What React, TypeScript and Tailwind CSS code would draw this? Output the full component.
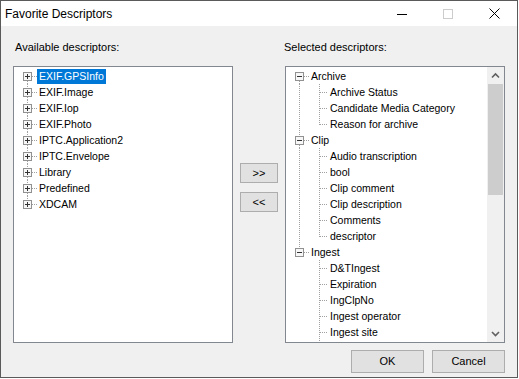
import React from 'react';

type Node = { label: string; children?: string[]; selected?: boolean; more?: boolean };

const available: Node[] = [
  { label: 'EXIF.GPSInfo', children: [], selected: true },
  { label: 'EXIF.Image', children: [] },
  { label: 'EXIF.Iop', children: [] },
  { label: 'EXIF.Photo', children: [] },
  { label: 'IPTC.Application2', children: [] },
  { label: 'IPTC.Envelope', children: [] },
  { label: 'Library', children: [] },
  { label: 'Predefined', children: [] },
  { label: 'XDCAM', children: [] },
];

// "more" = list keeps going below the visible area
const selected: Node[] = [
  { label: 'Archive', children: ['Archive Status', 'Candidate Media Category', 'Reason for archive'] },
  { label: 'Clip', children: ['Audio transcription', 'bool', 'Clip comment', 'Clip description', 'Comments', 'descriptor'] },
  { label: 'Ingest', children: ['D&TIngest', 'Expiration', 'IngClpNo', 'Ingest operator', 'Ingest site'], more: true },
];

const DOT = '#a0a0a0';

// one row of tree lines, drawn per row so the dotted guides join up
function RootGutter({ first, last, expanded }: { first: boolean; last: boolean; expanded: boolean }) {
  return (
    <svg width="23" height="16" className="shrink-0" shapeRendering="crispEdges">
      {!first && <line x1="13.5" y1="0" x2="13.5" y2="4" stroke={DOT} strokeDasharray="1 1" />}
      {!last && <line x1="13.5" y1="13" x2="13.5" y2="16" stroke={DOT} strokeDasharray="1 1" />}
      <line x1="18" y1="8.5" x2="23" y2="8.5" stroke={DOT} strokeDasharray="1 1" />
      <rect x="9.5" y="4.5" width="8" height="8" fill="#f7f7f7" stroke="#919191" />
      <line x1="11" y1="8.5" x2="16" y2="8.5" stroke="#333" />
      {!expanded && <line x1="13.5" y1="6" x2="13.5" y2="11" stroke="#333" />}
    </svg>
  );
}

function LeafGutter({ rootLine, lastChild }: { rootLine: boolean; lastChild: boolean }) {
  return (
    <svg width="42" height="16" className="shrink-0" shapeRendering="crispEdges">
      {rootLine && <line x1="13.5" y1="0" x2="13.5" y2="16" stroke={DOT} strokeDasharray="1 1" />}
      <line x1="33.5" y1="0" x2="33.5" y2={lastChild ? 9 : 16} stroke={DOT} strokeDasharray="1 1" />
      <line x1="34" y1="8.5" x2="42" y2="8.5" stroke={DOT} strokeDasharray="1 1" />
    </svg>
  );
}

function Label({ text, active }: { text: string; active?: boolean }) {
  return (
    <span
      className={`px-[2px] h-[15px] leading-[15px] whitespace-nowrap ${active ? 'bg-[#0078d7] text-white' : 'text-black'}`}
    >
      {text}
    </span>
  );
}

function Tree({ nodes, expanded }: { nodes: Node[]; expanded: boolean }) {
  return (
    <div className="pt-[1px] text-[10.5px] font-['Liberation_Sans',Arial,sans-serif]">
      {nodes.map((n, i) => {
        const last = i === nodes.length - 1;
        const kids = expanded ? n.children ?? [] : [];
        return (
          <div key={n.label}>
            <div className="flex items-center h-[16px]">
              <RootGutter first={i === 0} last={last} expanded={expanded} />
              <Label text={n.label} active={n.selected} />
            </div>
            {kids.map((c, j) => (
              <div key={c} className="flex items-center h-[16px]">
                <LeafGutter rootLine={!last} lastChild={j === kids.length - 1 && !n.more} />
                <Label text={c} />
              </div>
            ))}
            {expanded && n.more && (
              <div className="flex items-center h-[16px]">
                <LeafGutter rootLine={!last} lastChild={false} />
              </div>
            )}
          </div>
        );
      })}
    </div>
  );
}

function Chevron({ down }: { down?: boolean }) {
  return (
    <svg width="9" height="7" viewBox="0 0 9 7">
      <polyline
        points={down ? '1,2 4.5,5.5 8,2' : '1,5.5 4.5,2 8,5.5'}
        fill="none"
        stroke="#606060"
        strokeWidth="1.6"
      />
    </svg>
  );
}

function WinButton({ children, className = '' }: { children: React.ReactNode; className?: string }) {
  return (
    <button
      className={`border border-[#adadad] bg-[#e1e1e1] text-[11px] text-black flex items-center justify-center ${className}`}
    >
      {children}
    </button>
  );
}

export default function App() {
  return (
    <div className="w-[519px] h-[379px] bg-white">
      <div className="w-[518px] h-[378px] border border-[#5a5a5a] flex flex-col font-['Liberation_Sans',Arial,sans-serif]">
        {/* title bar */}
        <div className="h-[25px] bg-white flex items-center shrink-0">
          <div className="flex-1 pl-[4px] text-[12px] text-black">Favorite Descriptors</div>
          <div className="w-[46px] h-full flex items-center justify-center">
            <svg width="10" height="10" shapeRendering="crispEdges">
              <line x1="0" y1="5.5" x2="10" y2="5.5" stroke="#000" />
            </svg>
          </div>
          <div className="w-[46px] h-full flex items-center justify-center">
            <svg width="10" height="10" shapeRendering="crispEdges">
              <rect x="0.5" y="0.5" width="9" height="9" fill="none" stroke="#cccccc" />
            </svg>
          </div>
          <div className="w-[46px] h-full flex items-center justify-center">
            <svg width="11" height="11">
              <line x1="0.5" y1="0.5" x2="10.5" y2="10.5" stroke="#000" />
              <line x1="10.5" y1="0.5" x2="0.5" y2="10.5" stroke="#000" />
            </svg>
          </div>
        </div>

        {/* body */}
        <div className="flex-1 bg-[#f0f0f0] pt-[15px] pl-[12px]">
          <div className="grid grid-cols-[220px_52px_220px] text-[11px] text-black">
            <div className="h-[13px] leading-[13px] ml-[2px] mb-[12px]">Available descriptors:</div>
            <div />
            <div className="h-[13px] leading-[13px] ml-[-1px] mb-[12px]">Selected descriptors:</div>

            <div className="h-[277px] border border-[#828790] bg-white overflow-hidden">
              <Tree nodes={available} expanded={false} />
            </div>

            <div className="pt-[97px] pl-[7px] flex flex-col gap-[9px]">
              <WinButton className="w-[38px] h-[20px]">&gt;&gt;</WinButton>
              <WinButton className="w-[38px] h-[20px]">&lt;&lt;</WinButton>
            </div>

            <div className="h-[277px] border border-[#828790] bg-white flex overflow-hidden">
              <div className="flex-1 overflow-hidden">
                <Tree nodes={selected} expanded />
              </div>
              <div className="w-[17px] bg-[#f0f0f0] flex flex-col shrink-0">
                <div className="h-[17px] flex items-center justify-center">
                  <Chevron />
                </div>
                <div className="h-[111px] mx-[1px] bg-[#cdcdcd]" />
                <div className="flex-1" />
                <div className="h-[17px] flex items-center justify-center">
                  <Chevron down />
                </div>
              </div>
            </div>
          </div>

          <div className="w-[492px] flex justify-end gap-[8px] mt-[7px]">
            <WinButton className="w-[73px] h-[23px]">OK</WinButton>
            <WinButton className="w-[73px] h-[23px]">Cancel</WinButton>
          </div>
        </div>
      </div>
    </div>
  );
}
